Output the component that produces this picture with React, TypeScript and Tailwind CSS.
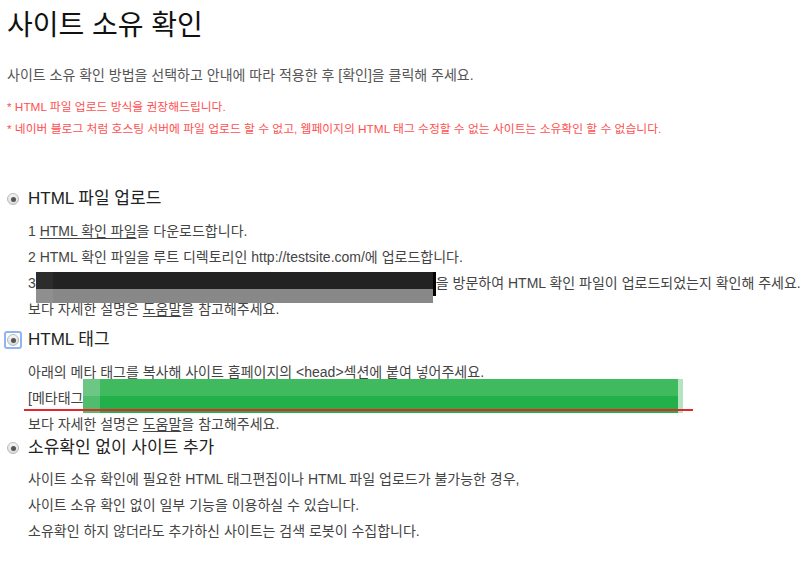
function Radio({ focused = false }: { focused?: boolean }) {
  const dot = (
    <span className="flex h-[12px] w-[12px] items-center justify-center rounded-full border border-[#b9b9b9] bg-gradient-to-b from-[#f4f4f4] to-[#dcdcdc]">
      <span className="h-[5px] w-[5px] rounded-full bg-[#555]" />
    </span>
  );
  if (!focused) return <span className="mr-[9px] inline-flex">{dot}</span>;
  return (
    <span className="-ml-[3px] mr-[6px] inline-flex rounded-[3px] border-2 border-[#8fb4f5] p-px">
      {dot}
    </span>
  );
}

function Heading({ focused, children }: { focused?: boolean; children: React.ReactNode }) {
  return (
    <div className="flex h-[24px] items-center text-[17px] leading-[24px] text-[#222]">
      <Radio focused={focused} />
      <span>{children}</span>
    </div>
  );
}

export default function App() {
  return (
    <div className="min-h-[565px] w-[812px] bg-white px-[7px] font-['Liberation_Sans','Noto_Sans_CJK_KR',sans-serif] text-[#444]">
      <h1 className="pt-[10px] text-[28px] leading-[32px] text-[#111]">사이트 소유 확인</h1>
      <p className="mt-[23px] text-[14px] leading-[20px] text-[#555]">
        사이트 소유 확인 방법을 선택하고 안내에 따라 적용한 후 [확인]을 클릭해 주세요.
      </p>
      <div className="mt-[11px] text-[11.8px] leading-[22px] text-[#ff4f4f]">
        <p>* HTML 파일 업로드 방식을 권장해드립니다.</p>
        <p>* 네이버 블로그 처럼 호스팅 서버에 파일 업로드 할 수 없고, 웹페이지의 HTML 태그 수정할 수 없는 사이트는 소유확인 할 수 없습니다.</p>
      </div>

      {/* HTML 파일 업로드 */}
      <div className="mt-[47px]">
        <Heading>HTML 파일 업로드</Heading>
        <div className="mt-[7px] pl-[21px] text-[14px] leading-[26px]">
          <p>
            1 <span className="underline underline-offset-2">HTML 확인 파일</span>을 다운로드합니다.
          </p>
          <p>2 HTML 확인 파일을 루트 디렉토리인 http://testsite.com/에 업로드합니다.</p>
          <p className="whitespace-nowrap">
            3
            <span className="relative inline-block h-[26px] w-[400px] align-top">
              {/* redacted url */}
              <span className="absolute left-0 top-[2px] flex">
                <span className="flex w-[397px] flex-col">
                  <span className="flex h-[17px]">
                    <span className="w-[17px] bg-[#2c2c2c]" />
                    <span className="flex-1 bg-[#222]" />
                  </span>
                  <span className="flex h-[14px]">
                    <span className="w-[17px] bg-[#8f8f8f]" />
                    <span className="flex-1 bg-[#888]" />
                  </span>
                </span>
                <span className="h-[24px] w-[3px] bg-black" />
              </span>
            </span>
            을 방문하여 HTML 확인 파일이 업로드되었는지 확인해 주세요.
          </p>
          <p>
            보다 자세한 설명은 <span className="underline underline-offset-2">도움말</span>을 참고해주세요.
          </p>
        </div>
      </div>

      {/* HTML 태그 */}
      <div className="mt-[6px]">
        <Heading focused>HTML 태그</Heading>
        <div className="mt-[7px] pl-[21px] text-[14px] leading-[26px]">
          <p>아래의 메타 태그를 복사해 사이트 홈페이지의 &lt;head&gt;섹션에 붙여 넣어주세요.</p>
          <p className="relative">
            [메타태그]
            {/* redacted meta tag */}
            <span className="absolute left-[55px] top-[-6px] flex">
              <span className="flex w-[595px] flex-col">
                <span className="flex h-[17px]">
                  <span className="w-[17px] bg-[#6cc785]" />
                  <span className="flex-1 bg-[#3fba5f]" />
                </span>
                <span className="flex h-[17px]">
                  <span className="w-[17px] bg-[#4fbd6b]" />
                  <span className="flex-1 bg-[#22b04b]" />
                </span>
              </span>
              <span className="h-[34px] w-[5px] bg-[#b5e4c0]" />
            </span>
            <span className="absolute left-[-4px] top-[24px] h-[2px] w-[669px] bg-[#e3262b]" />
          </p>
          <p>
            보다 자세한 설명은 <span className="underline underline-offset-2">도움말</span>을 참고해주세요.
          </p>
        </div>
      </div>

      {/* 소유확인 없이 사이트 추가 */}
      <div className="-mt-[1px]">
        <Heading>소유확인 없이 사이트 추가</Heading>
        <div className="mt-[6px] pl-[21px] text-[14px] leading-[26px]">
          <p>사이트 소유 확인에 필요한 HTML 태그편집이나 HTML 파일 업로드가 불가능한 경우,</p>
          <p>사이트 소유 확인 없이 일부 기능을 이용하실 수 있습니다.</p>
          <p>소유확인 하지 않더라도 추가하신 사이트는 검색 로봇이 수집합니다.</p>
        </div>
      </div>
    </div>
  );
}
